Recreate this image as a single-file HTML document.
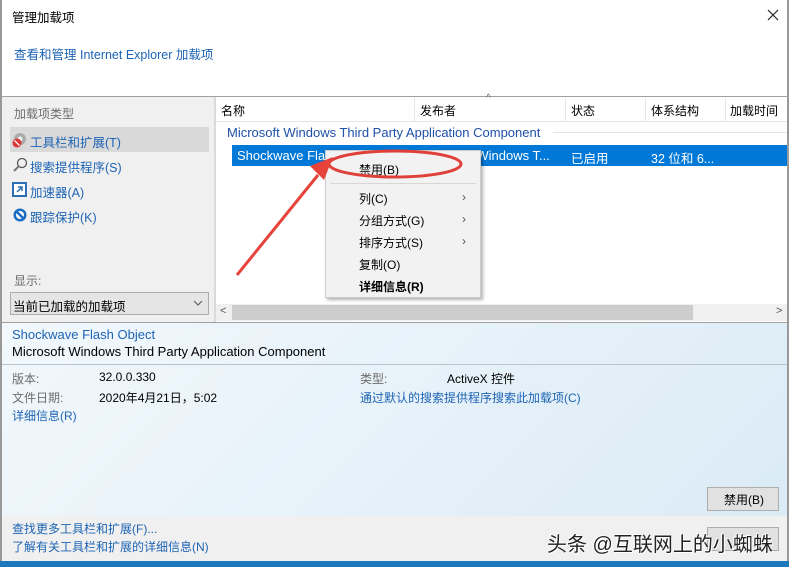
<!DOCTYPE html>
<html><head><meta charset="utf-8"><style>
*{margin:0;padding:0;box-sizing:border-box}
body{width:789px;height:567px;overflow:hidden;background:#fff;font-family:"Liberation Sans","Microsoft YaHei","Noto Sans CJK SC",sans-serif;font-size:12px;color:#000;position:relative}
.a{position:absolute;white-space:nowrap}
.blue{color:#1e64b4}
</style></head><body>
<div class="a" style="left:0;top:0;width:2px;height:567px;background:#999"></div>
<div class="a" style="left:787px;top:0;width:2px;height:567px;background:#999"></div>
<div class="a" style="left:12px;top:7px;font-size:12.5px">管理加载项</div>
<svg class="a" style="left:767px;top:9px" width="12" height="12"><path d="M1 1 L11 11 M11 1 L1 11" stroke="#222" stroke-width="1.2"/></svg>
<div class="a blue" style="left:14px;top:44px;font-size:12.5px">查看和管理 Internet Explorer 加载项</div>
<div class="a" style="left:2px;top:96px;width:785px;height:1px;background:#a0a0a0"></div>
<!-- left panel -->
<div class="a" style="left:2px;top:97px;width:212px;height:225px;background:#f0f0f0"></div>
<div class="a" style="left:214px;top:97px;width:2px;height:225px;background:#dadada"></div>
<div class="a" style="left:14px;top:105px;color:#6d6d6d">加载项类型</div>
<div class="a" style="left:10px;top:127px;width:199px;height:25px;background:#d9d9d9"></div>
<svg class="a" style="left:11px;top:131px" width="18" height="18"><circle cx="9" cy="8" r="6" fill="#aaa"/><circle cx="9" cy="8" r="2.5" fill="#eee"/><circle cx="6" cy="12" r="4.5" fill="#d33"/><line x1="3.5" y1="9.5" x2="8.5" y2="14.5" stroke="#fff" stroke-width="1.3"/></svg>
<div class="a blue" style="left:30px;top:132px;font-size:12.5px">工具栏和扩展(T)</div>
<svg class="a" style="left:12px;top:157px" width="16" height="16"><circle cx="10" cy="6" r="4.5" fill="none" stroke="#555" stroke-width="1.3"/><line x1="7" y1="9" x2="2" y2="14" stroke="#777" stroke-width="2"/></svg>
<div class="a blue" style="left:30px;top:157px;font-size:12.5px">搜索提供程序(S)</div>
<svg class="a" style="left:12px;top:182px" width="16" height="16"><rect x="1" y="1" width="13" height="13" fill="#fff" stroke="#2c6fb7" stroke-width="2"/><path d="M5 10 L10 5 M6 5 H10 V9" stroke="#2c6fb7" stroke-width="1.5" fill="none"/></svg>
<div class="a blue" style="left:30px;top:182px;font-size:12.5px">加速器(A)</div>
<svg class="a" style="left:12px;top:207px" width="16" height="16"><circle cx="8" cy="8" r="6.5" fill="#1b6cc4"/><circle cx="8" cy="8" r="4" fill="#fff"/><line x1="4" y1="4" x2="12" y2="12" stroke="#1b6cc4" stroke-width="2.5"/></svg>
<div class="a blue" style="left:30px;top:207px;font-size:12.5px">跟踪保护(K)</div>
<div class="a" style="left:14px;top:272px;color:#6d6d6d">显示:</div>
<div class="a" style="left:10px;top:292px;width:199px;height:23px;background:#e5e5e5;border:1px solid #adadad"></div>
<div class="a" style="left:13px;top:296px;font-size:12.5px">当前已加载的加载项</div>
<svg class="a" style="left:193px;top:299px" width="10" height="8"><path d="M1 2 L5 6 L9 2" stroke="#555" fill="none"/></svg>
<!-- list -->
<div class="a" style="left:216px;top:121px;width:571px;height:1px;background:#e5e5e5"></div>
<div class="a" style="left:221px;top:102px">名称</div>
<div class="a" style="left:414px;top:98px;width:1px;height:23px;background:#e5e5e5"></div>
<div class="a" style="left:420px;top:102px">发布者</div>
<div class="a" style="left:486px;top:93px;font-size:10px;color:#666">^</div>
<div class="a" style="left:565px;top:98px;width:1px;height:23px;background:#e5e5e5"></div>
<div class="a" style="left:571px;top:102px">状态</div>
<div class="a" style="left:645px;top:98px;width:1px;height:23px;background:#e5e5e5"></div>
<div class="a" style="left:651px;top:102px">体系结构</div>
<div class="a" style="left:725px;top:98px;width:1px;height:23px;background:#e5e5e5"></div>
<div class="a" style="left:730px;top:102px">加载时间</div>
<div class="a" style="left:227px;top:125px;color:#1e50a8;font-size:13px">Microsoft Windows Third Party Application Component</div>
<div class="a" style="left:553px;top:132px;width:234px;height:1px;background:#e0e6f0"></div>
<div class="a" style="left:232px;top:145px;width:555px;height:21px;background:#0078d7"></div>
<div class="a" style="left:237px;top:148px;color:#fff;font-size:13px">Shockwave Flash Object</div>
<div class="a" style="left:420px;top:148px;color:#fff;font-size:13px">Microsoft Windows T...</div>
<div class="a" style="left:571px;top:148px;color:#fff;font-size:12.5px">已启用</div>
<div class="a" style="left:651px;top:148px;color:#fff;font-size:12.5px">32 位和 6...</div>
<div class="a" style="left:216px;top:304px;width:571px;height:17px;background:#f0f0f0"></div>
<div class="a" style="left:232px;top:305px;width:461px;height:15px;background:#cdcdcd"></div>
<div class="a" style="left:220px;top:305px;font-size:11px;color:#555">&lt;</div>
<div class="a" style="left:776px;top:305px;font-size:11px;color:#555">&gt;</div>
<!-- context menu -->
<div class="a" style="left:325px;top:150px;width:156px;height:148px;background:#f2f2f2;border:1px solid #ccc;box-shadow:2px 2px 3px rgba(0,0,0,.3)"></div>
<div class="a" style="left:359px;top:161px">禁用(B)</div>
<div class="a" style="left:330px;top:183px;width:146px;height:1px;background:#d7d7d7"></div>
<div class="a" style="left:359px;top:190px">列(C)</div>
<div class="a" style="left:359px;top:212px">分组方式(G)</div>
<div class="a" style="left:359px;top:234px">排序方式(S)</div>
<div class="a" style="left:359px;top:256px">复制(O)</div>
<div class="a" style="left:359px;top:278px;font-weight:bold">详细信息(R)</div>
<div class="a" style="left:462px;top:190px;color:#555">›</div>
<div class="a" style="left:462px;top:212px;color:#555">›</div>
<div class="a" style="left:462px;top:234px;color:#555">›</div>
<svg class="a" style="left:0;top:0" width="789" height="567"><ellipse cx="395" cy="164" rx="66" ry="13" fill="none" stroke="#e0403a" stroke-width="3"/><line x1="237" y1="275" x2="318" y2="175" stroke="#e8433b" stroke-width="3"/><polygon points="333,157 310,166 324,180" fill="#e8433b"/></svg>
<!-- info panel -->
<div class="a" style="left:2px;top:322px;width:785px;height:1px;background:#a0a0a0"></div>
<div class="a" style="left:2px;top:323px;width:785px;height:193px;background:linear-gradient(135deg,#f2f8fc,#dbebf6)"></div>
<div class="a blue" style="left:12px;top:327px;font-size:13px">Shockwave Flash Object</div>
<div class="a" style="left:12px;top:344px;font-size:13px">Microsoft Windows Third Party Application Component</div>
<div class="a" style="left:2px;top:364px;width:785px;height:1px;background:#b8c4cc"></div>
<div class="a" style="left:12px;top:370px;color:#6d6d6d">版本:</div>
<div class="a" style="left:99px;top:370px">32.0.0.330</div>
<div class="a" style="left:12px;top:389px;color:#6d6d6d">文件日期:</div>
<div class="a" style="left:99px;top:389px">2020年4月21日，5:02</div>
<div class="a blue" style="left:12px;top:407px">详细信息(R)</div>
<div class="a" style="left:360px;top:370px;color:#6d6d6d">类型:</div>
<div class="a" style="left:447px;top:370px">ActiveX 控件</div>
<div class="a blue" style="left:360px;top:389px">通过默认的搜索提供程序搜索此加载项(C)</div>
<div class="a" style="left:707px;top:487px;width:72px;height:24px;background:#e1e1e1;border:1px solid #adadad"></div>
<div class="a" style="left:724px;top:491px">禁用(B)</div>
<!-- bottom -->
<div class="a" style="left:2px;top:516px;width:785px;height:45px;background:#f0f0f0"></div>
<div class="a blue" style="left:12px;top:520px">查找更多工具栏和扩展(F)...</div>
<div class="a blue" style="left:12px;top:538px">了解有关工具栏和扩展的详细信息(N)</div>
<div class="a" style="left:707px;top:527px;width:72px;height:24px;background:#e1e1e1;border:1px solid #adadad"></div>
<div class="a" style="left:547px;top:528px;font-size:20px;color:#222;text-shadow:1px 1px 0 #fff,-1px -1px 0 #fff">头条 @互联网上的小蜘蛛</div>
<div class="a" style="left:0;top:561px;width:789px;height:6px;background:#1c78bd"></div>
</body></html>
